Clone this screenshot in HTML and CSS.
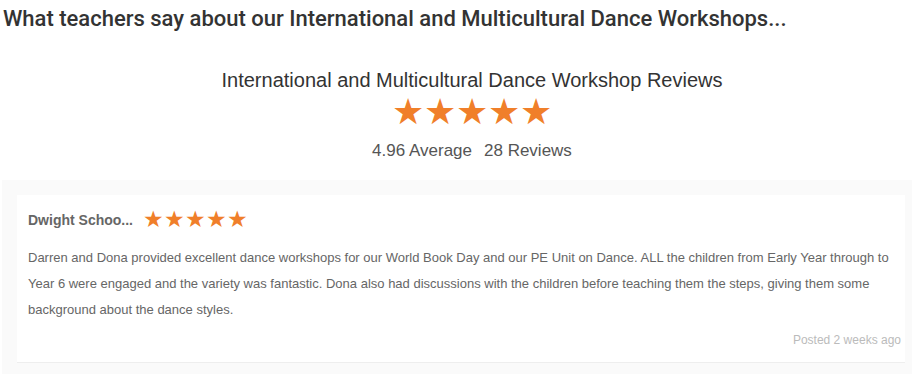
FILE: index.html
```html
<!DOCTYPE html>
<html lang="en">
<head>
    <meta charset="UTF-8">
    <meta name="viewport" content="width=device-width, initial-scale=1.0">
    <title>Dance Workshop Reviews</title>
    <link rel="stylesheet" href="styles.css">
</head>
<body>

<h1 class="page-title">What teachers say about our International and Multicultural Dance Workshops...</h1>

<div class="summary">
    <h2>International and Multicultural Dance Workshop Reviews</h2>
    <div class="stars big">&#9733;&#9733;&#9733;&#9733;&#9733;</div>
    <p class="summary-stats"><span>4.96 Average</span><span>28 Reviews</span></p>
</div>

<div class="reviews">
    <div class="review-card">
        <div class="review-head">
            <span class="reviewer">Dwight Schoo...</span>
            <span class="stars small">&#9733;&#9733;&#9733;&#9733;&#9733;</span>
        </div>
        <p class="review-text">Darren and Dona provided excellent dance workshops for our World Book Day and our PE Unit on Dance. ALL the children from Early Year through to Year 6 were engaged and the variety was fantastic. Dona also had discussions with the children before teaching them the steps, giving them some background about the dance styles.</p>
        <div class="posted">Posted 2 weeks ago</div>
    </div>
</div>

</body>
</html>
```

FILE: styles.css
```css
* {
    margin: 0;
    padding: 0;
    box-sizing: border-box;
}
body {
    font-family: 'Liberation Sans', Arial, sans-serif;
    background-color: #fff;
    color: #333;
    padding: 0 2px;
}
.page-title {
    font-family: Roboto, 'Liberation Sans', sans-serif;
    font-size: 22px;
    font-weight: 500;
    color: #333;
    padding: 5px 1px 0;
    line-height: 28px;
}
.summary {
    text-align: center;
    padding: 33px 0 0 20px;
    height: 147px;
}
.summary h2 {
    font-size: 20px;
    font-weight: normal;
    color: #333;
    line-height: 28px;
}
.stars {
    color: #f07f2a;
    letter-spacing: 0;
}
.stars.big {
    font-size: 36px;
    line-height: 34px;
    margin-top: 1px;
}
.summary-stats {
    font-size: 17px;
    color: #555;
    margin-top: 12px;
}
.summary-stats span {
    margin: 0 6px;
}
.reviews {
    background-color: #fafafa;
    width: 910px;
    padding: 15px 7px 12px 15px;
}
.review-card {
    background-color: #fff;
    border-bottom: 1px solid #eee;
    padding: 12px 4px 15px 11px;
}
.review-head {
    display: flex;
    align-items: center;
    gap: 10px;
}
.reviewer {
    font-size: 14px;
    font-weight: bold;
    color: #666;
}
.stars.small {
    font-size: 22.5px;
    line-height: 26px;
}
.review-text {
    font-size: 13px;
    line-height: 26px;
    color: #666;
    margin-top: 12px;
}
.posted {
    text-align: right;
    font-size: 12px;
    color: #bbb;
    margin-top: 10px;
}
```
